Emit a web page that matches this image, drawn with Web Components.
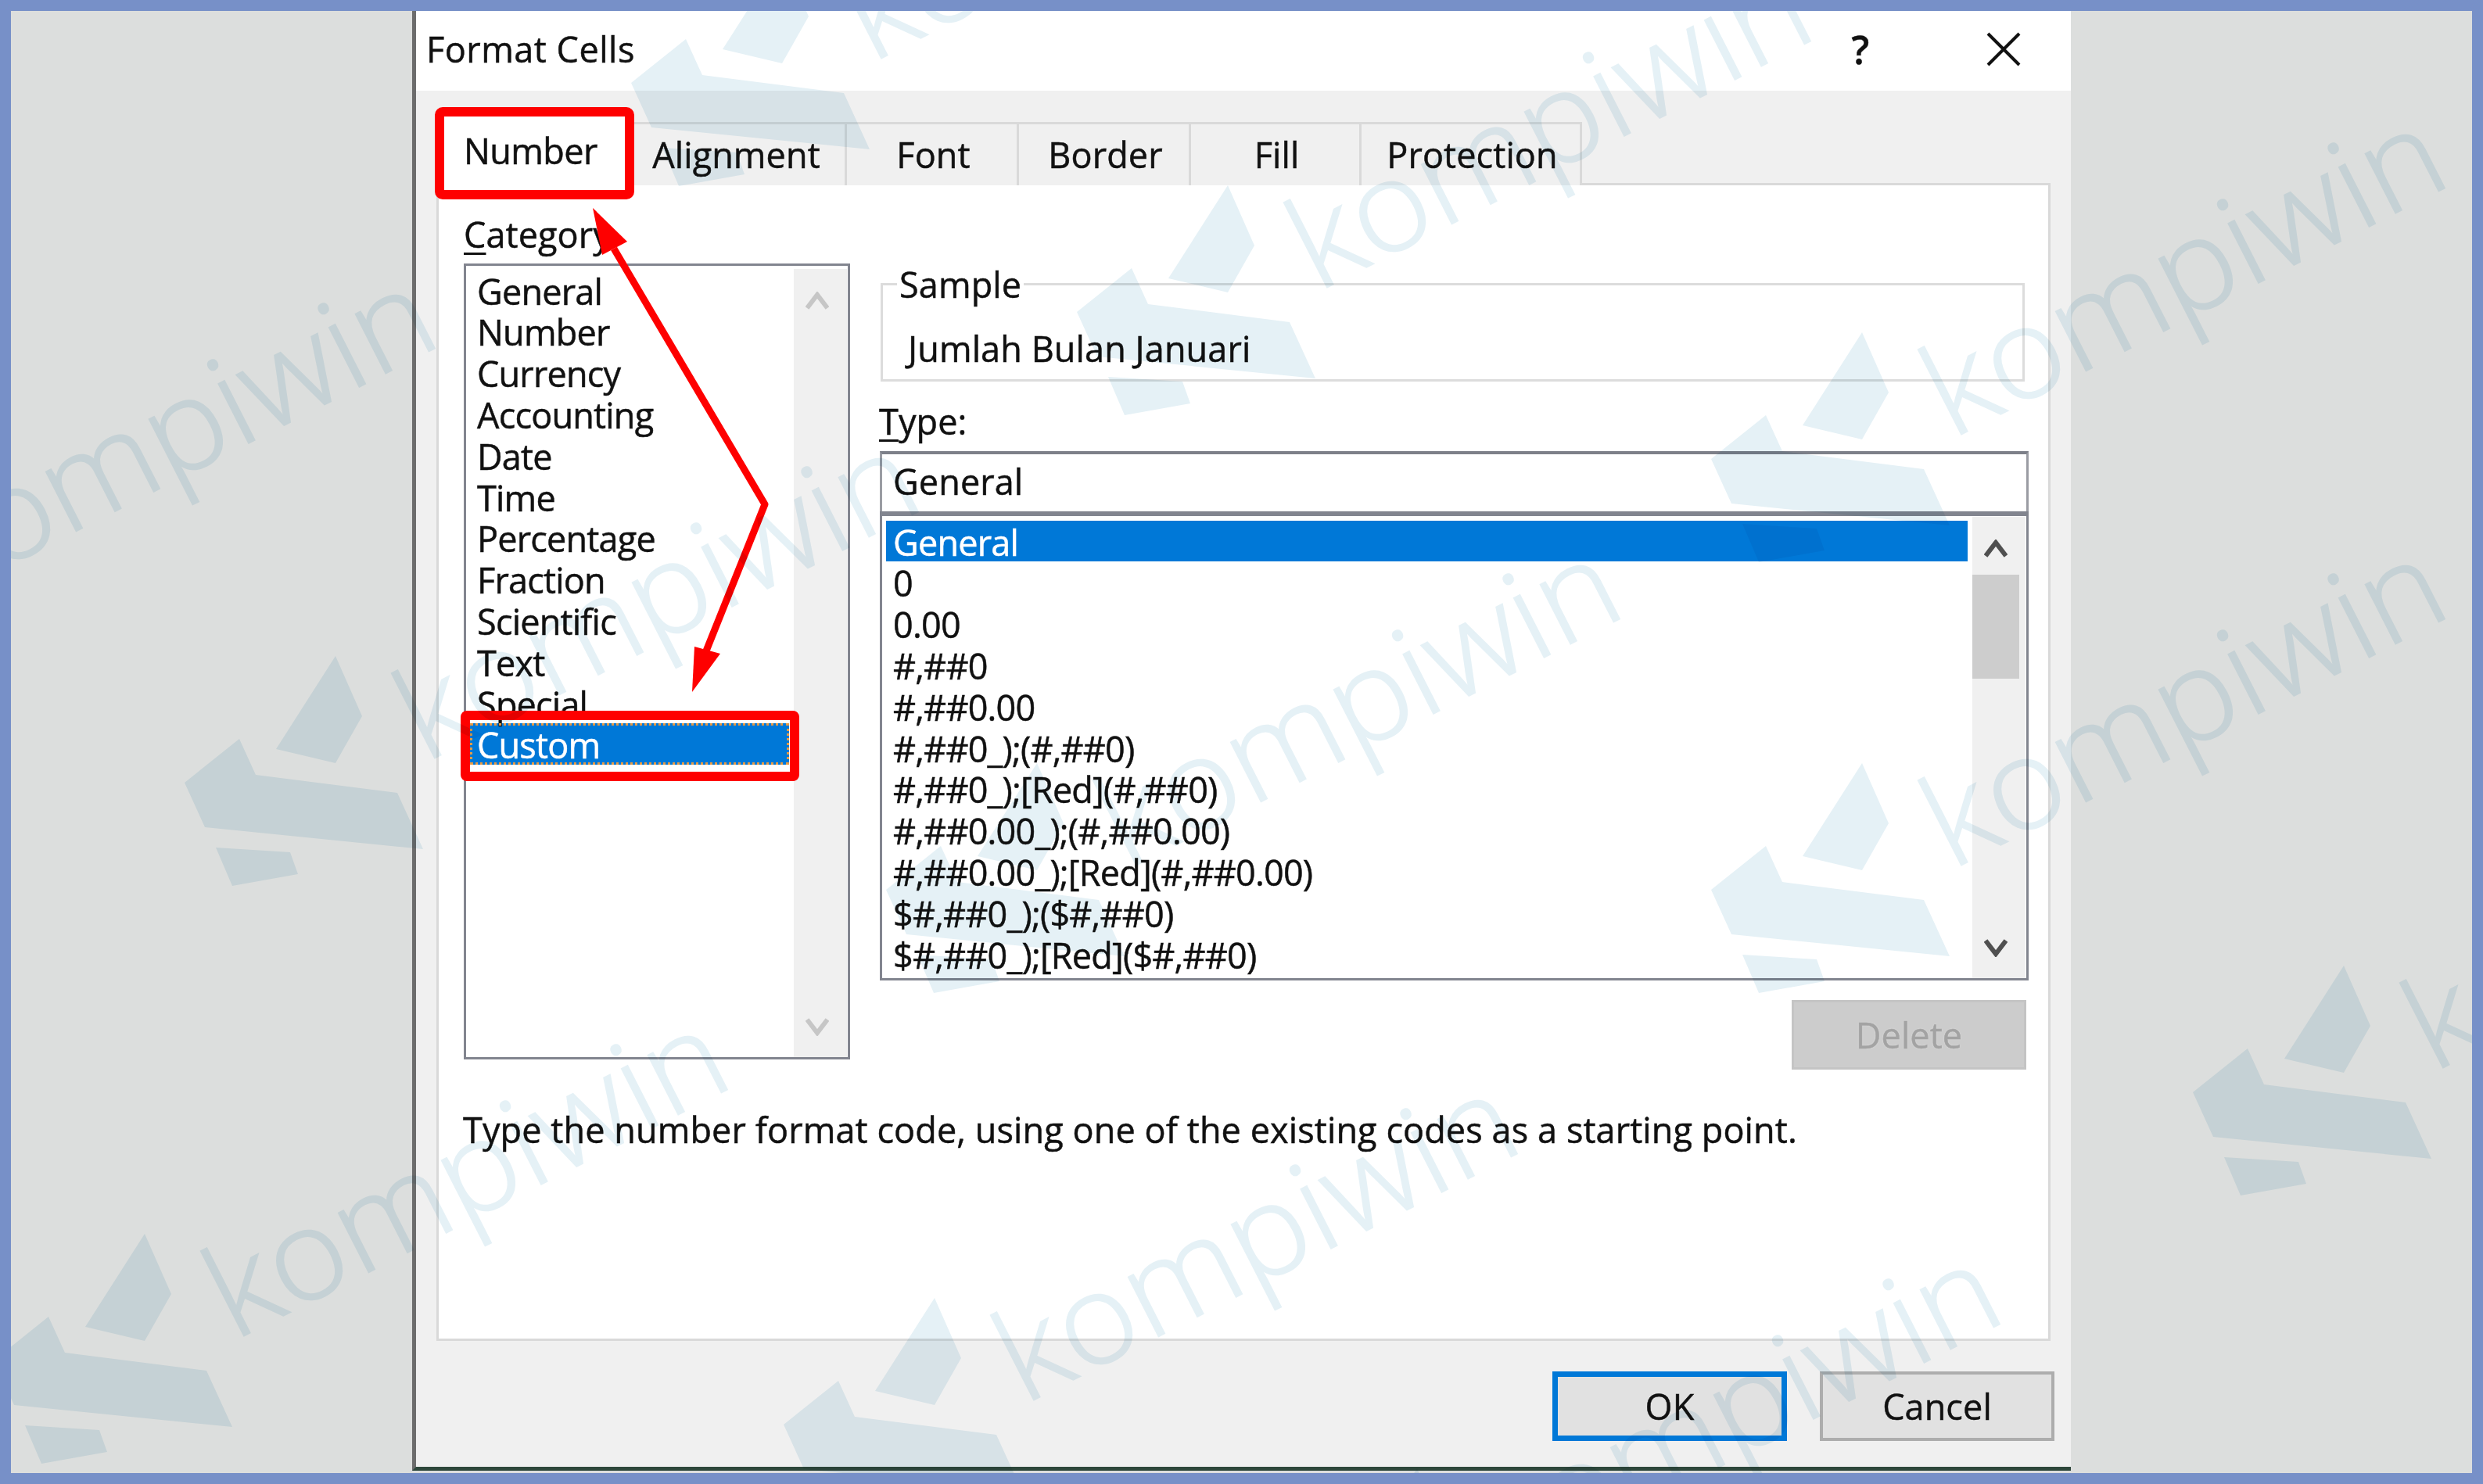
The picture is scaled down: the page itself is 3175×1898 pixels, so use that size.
<!DOCTYPE html>
<html>
<head>
<meta charset="utf-8">
<title>Format Cells</title>
<style>
  html, body { margin: 0; background: #dcdedd; }
  body {
    width: 3175px;
    height: 1898px;
    overflow: hidden;
    font: 45px/50px "Open Sans", "Noto Sans", "Liberation Sans", sans-serif;
    letter-spacing: 0.1px;
    color: #111;
    -webkit-text-stroke: 0.5px;
  }
</style>
</head>
<body>

<fc-screen>
  <fc-dialog heading="Format Cells">
    <fc-tabs slot="tabs">
      <fc-tab selected width="246" pad="28">Number</fc-tab>
      <fc-tab width="272" shift="12">Alignment</fc-tab>
      <fc-tab width="220">Font</fc-tab>
      <fc-tab width="220">Border</fc-tab>
      <fc-tab width="218">Fill</fc-tab>
      <fc-tab width="282">Protection</fc-tab>
    </fc-tabs>

    <fc-number-panel>
      <fc-label slot="category-label" key="C" rest="ategory"></fc-label>
      <fc-listbox slot="category" disabled-bar>
        <fc-option>General</fc-option>
        <fc-option>Number</fc-option>
        <fc-option>Currency</fc-option>
        <fc-option>Accounting</fc-option>
        <fc-option>Date</fc-option>
        <fc-option>Time</fc-option>
        <fc-option>Percentage</fc-option>
        <fc-option>Fraction</fc-option>
        <fc-option>Scientific</fc-option>
        <fc-option>Text</fc-option>
        <fc-option>Special</fc-option>
        <fc-option selected focused>Custom</fc-option>
      </fc-listbox>

      <fc-group slot="sample" legend="Sample">Jumlah Bulan Januari</fc-group>
      <fc-label slot="type-label" key="T" rest="ype:"></fc-label>
      <fc-input slot="type-input">General</fc-input>
      <fc-listbox slot="type-list" thumb>
        <fc-option selected>General</fc-option>
        <fc-option>0</fc-option>
        <fc-option>0.00</fc-option>
        <fc-option>#,##0</fc-option>
        <fc-option>#,##0.00</fc-option>
        <fc-option>#,##0_);(#,##0)</fc-option>
        <fc-option>#,##0_);[Red](#,##0)</fc-option>
        <fc-option>#,##0.00_);(#,##0.00)</fc-option>
        <fc-option>#,##0.00_);[Red](#,##0.00)</fc-option>
        <fc-option>$#,##0_);($#,##0)</fc-option>
        <fc-option>$#,##0_);[Red]($#,##0)</fc-option>
      </fc-listbox>
      <fc-button slot="delete" disabled>Delete</fc-button>
      <span slot="hint">Type the number format code, using one of the existing codes as a starting point.</span>
    </fc-number-panel>

    <fc-button slot="footer" primary>OK</fc-button>
    <fc-button slot="footer">Cancel</fc-button>
  </fc-dialog>
</fc-screen>

<script>
const shadowOf = (el, html) => {
  el.attachShadow({ mode: 'open' }).innerHTML = html;
};

class FcChevron extends HTMLElement {
  constructor() {
    super();
    const down = this.hasAttribute('down');
    shadowOf(this, `
      <style>
        :host { display: block; width: 30px; height: 24px; }
        svg { display: block; }
        path { fill: none; stroke: currentColor; stroke-width: 6; }
      </style>
      <svg width="30" height="24" viewBox="0 0 30 24">
        <path d="${down ? 'M2 3 L15 20 L28 3' : 'M2 21 L15 4 L28 21'}"/>
      </svg>
    `);
  }
}

class FcOption extends HTMLElement {
  constructor() {
    super();
    shadowOf(this, `
      <style>
        :host {
          display: block;
          height: 52.8px;
          line-height: 52.8px;
          padding: 2px 0 0 9px;
          white-space: nowrap;
          box-sizing: border-box;
          letter-spacing: -0.8px;
        }
        :host([selected]) {
          background: #0078d7;
          color: #fff;
        }
        :host([focused]) {
          outline: 3px dotted #e59a45;
          outline-offset: -3px;
        }
      </style>
      <slot></slot>
    `);
  }
}

class FcListbox extends HTMLElement {
  constructor() {
    super();
    const dim = this.hasAttribute('disabled-bar');
    shadowOf(this, `
      <style>
        :host {
          display: flex;
          box-sizing: border-box;
          background: #fff;
          border: 3px solid #82858f;
          height: 100%;
        }
        :host([thumb]) { border-top-width: 6px; }
        .rows {
          flex: 1;
          min-width: 0;
          overflow: hidden;
          padding: 4.6px 3px 0 5px;
        }
        :host([thumb]) .rows { padding-top: 5.6px; }
        .bar {
          flex: none;
          width: 68px;
          margin: 4px 1px 0 3px;
          background: #f0f0f0;
          display: flex;
          flex-direction: column;
          align-items: center;
          padding: 29px 8px 27px 0;
          box-sizing: border-box;
          color: ${dim ? '#c6c6c6' : '#505050'};
        }
        :host([thumb]) .bar { margin-top: 1px; }
        .thumb {
          width: 60px;
          height: 133px;
          margin-top: 21px;
          background: #cdcdcd;
        }
        .end { margin-top: auto; }
      </style>
      <div class="rows"><slot></slot></div>
      <div class="bar">
        <fc-chevron></fc-chevron>
        ${this.hasAttribute('thumb') ? '<div class="thumb"></div>' : ''}
        <fc-chevron class="end" down></fc-chevron>
      </div>
    `);
  }
}

class FcLabel extends HTMLElement {
  constructor() {
    super();
    shadowOf(this, `
      <style>
        :host { display: block; }
        u { text-underline-offset: 6px; text-decoration-thickness: 3px; }
      </style>
      <u>${this.getAttribute('key')}</u>${this.getAttribute('rest')}
    `);
  }
}

class FcGroup extends HTMLElement {
  constructor() {
    super();
    shadowOf(this, `
      <style>
        :host {
          display: block;
          position: relative;
          box-sizing: border-box;
          height: 126px;
          border: 3px solid #dcdcdc;
          padding: 56px 0 0 32px;
        }
        .legend {
          position: absolute;
          left: 18px;
          top: -26px;
          padding: 0 3px;
          background: #fff;
        }
      </style>
      <span class="legend">${this.getAttribute('legend')}</span>
      <slot></slot>
    `);
  }
}

class FcInput extends HTMLElement {
  constructor() {
    super();
    shadowOf(this, `
      <style>
        :host {
          display: flex;
          align-items: center;
          box-sizing: border-box;
          height: 77px;
          padding: 0 0 4px 14px;
          background: #fff;
          border: solid #9a9ca3;
          border-width: 4px 3px 0;
          border-top-color: #7d8089;
        }
      </style>
      <slot></slot>
    `);
  }
}

class FcButton extends HTMLElement {
  constructor() {
    super();
    shadowOf(this, `
      <style>
        :host {
          display: flex;
          align-items: center;
          justify-content: center;
          box-sizing: border-box;
          width: 300px;
          height: 89px;
          background: #e1e1e1;
          border: 4px solid #adadad;
        }
        :host([primary]) { border: 7px solid #0078d7; }
        :host([disabled]) {
          background: #cccccc;
          border: 3px solid #c4c4c4;
          color: #a3a3a3;
          text-shadow: 0 0 2px #e4e4e4;
        }
      </style>
      <slot></slot>
    `);
  }
}

class FcTab extends HTMLElement {
  constructor() {
    super();
    const width = this.getAttribute('width');
    const pad = this.getAttribute('pad');
    const shift = this.getAttribute('shift') || 0;
    shadowOf(this, `
      <style>
        :host {
          display: flex;
          align-items: center;
          justify-content: ${pad ? 'flex-start' : 'center'};
          box-sizing: border-box;
          width: ${width}px;
          height: 81px;
          padding: 0 ${shift}px 0 ${pad || 4}px;
          background: #f0f0f0;
          border: solid #d9d9d9;
          border-width: 3px 3px 0 0;
        }
        :host([selected]) {
          height: 93px;
          padding-top: 4px;
          padding-bottom: 0;
          letter-spacing: -0.6px;
          background: #fff;
          border-width: 0;
          position: relative;
        }
      </style>
      <slot></slot>
    `);
  }
}

class FcTabs extends HTMLElement {
  constructor() {
    super();
    shadowOf(this, `
      <style>
        :host {
          display: flex;
          align-items: flex-end;
          margin: 0 0 -3px 7px;
          position: relative;
        }
      </style>
      <slot></slot>
    `);
  }
}

class FcNumberPanel extends HTMLElement {
  constructor() {
    super();
    shadowOf(this, `
      <style>
        :host {
          display: block;
          box-sizing: border-box;
          height: 1481px;
          background: #fff;
          border: 3px solid #d9d9d9;
          padding: 38px 25px 0 32px;
        }
        .cols {
          display: grid;
          grid-template-columns: 494px 1469px;
          column-gap: 38px;
        }
        .left, .right { display: flex; flex-direction: column; }
        .left .lbl { margin-bottom: 12px; }
        .left .box { height: 1018px; }
        .right .sample { margin: 87px 5px 0 1px; }
        .right .lbl { margin: 26px 0 13px -1px; }
        .right .box { height: 600px; }
        .right .del { align-self: flex-end; margin: 25px 3px 0 0; }
        .hint { margin: 52px 0 0 -1px; white-space: nowrap; }
      </style>
      <div class="cols">
        <div class="left">
          <div class="lbl"><slot name="category-label"></slot></div>
          <div class="box"><slot name="category"></slot></div>
        </div>
        <div class="right">
          <div class="sample"><slot name="sample"></slot></div>
          <div class="lbl"><slot name="type-label"></slot></div>
          <slot name="type-input"></slot>
          <div class="box"><slot name="type-list"></slot></div>
          <div class="del"><slot name="delete"></slot></div>
        </div>
      </div>
      <div class="hint"><slot name="hint"></slot></div>
    `);
  }
}

class FcDialog extends HTMLElement {
  constructor() {
    super();
    shadowOf(this, `
      <style>
        :host {
          display: flex;
          flex-direction: column;
          box-sizing: border-box;
          height: 100%;
          border-left: 5px solid #6c6c6c;
          border-bottom: 5px solid #2e473b;
          background: #f0f0f0;
          filter: blur(0.6px);
        }
        .title {
          flex: none;
          display: flex;
          align-items: center;
          box-sizing: border-box;
          height: 102px;
          padding: 0 0 4px 13px;
          background: #fff;
        }
        .title h1 { font: inherit; letter-spacing: 0.5px; margin: 0; flex: 1; }
        .help { width: 30px; text-align: center; margin-right: 146px; font-weight: 600; font-size: 50px; }
        .close { display: block; margin-right: 64px; }
        .close path { stroke: #111; stroke-width: 4; fill: none; }
        .body {
          flex: 1;
          display: flex;
          flex-direction: column;
          padding: 28px 26px 0;
        }
        .footer {
          display: flex;
          justify-content: flex-end;
          gap: 42px;
          padding-top: 39px;
          margin-right: -5px;
        }
      </style>
      <div class="title">
        <h1>${this.getAttribute('heading')}</h1>
        <span class="help">?</span>
        <svg class="close" width="44" height="44" viewBox="0 0 44 44">
          <path d="M2 2 L42 42 M42 2 L2 42"/>
        </svg>
      </div>
      <div class="body">
        <slot name="tabs"></slot>
        <slot></slot>
        <div class="footer"><slot name="footer"></slot></div>
      </div>
    `);
  }
}

/* red markers drawn over the dialog, in page coordinates */
class FcAnnotations extends HTMLElement {
  constructor() {
    super();
    shadowOf(this, `
      <style>
        :host { position: absolute; inset: 0; display: block; pointer-events: none; }
        svg { position: absolute; left: 0; top: 0; }
        rect, path { stroke: #fe0000; fill: none; }
        .head { fill: #fe0000; stroke: none; }
      </style>
      <svg width="3147" height="1870" viewBox="14 14 3147 1870">
        <rect x="562" y="143" width="243" height="106" rx="4" stroke-width="12"/>
        <rect x="595" y="915" width="421" height="78" rx="2" stroke-width="12"/>
        <path d="M785 318 L978 645 L902 835" stroke-width="9" stroke-linejoin="round"/>
        <path class="head" d="M758 266 L802 309 L770 326 Z"/>
        <path class="head" d="M885 885 L921 836 L888 827 Z"/>
      </svg>
    `);
  }
}

/* kompiwin logo + name, repeated by hand where the site stamped it */
class FcWatermark extends HTMLElement {
  constructor() {
    super();
    const spots = [
      [2188, 425], [2188, 976], [807, -56], [1377, 237], [-8, 1578], [236, 839],
      [2804, 1235], [1002, 1660], [1133, 976], [1619, 1878], [-382, 630]
    ];
    const marks = spots.map(([x, y]) => `
      <g transform="translate(${x} ${y})">
        <polygon points="193,0 227,77 193,137 117,119"/>
        <polygon points="70,106 0,162 26,219 305,247 272,175 91,152"/>
        <polygon points="40,245 135,251 145,279 61,294"/>
        <text transform="translate(307 137) rotate(-27)" textLength="722" lengthAdjust="spacingAndGlyphs">kompiwin</text>
      </g>
    `).join('');
    shadowOf(this, `
      <style>
        :host {
          position: absolute;
          inset: 0;
          display: block;
          pointer-events: none;
          mix-blend-mode: multiply;
        }
        svg { position: absolute; left: 0; top: 0; }
        polygon, text { fill: #e5f1f6; }
        text {
          font: 300 160px "Open Sans", "Noto Sans", sans-serif;
          letter-spacing: 0;
          stroke: #e5f1f6;
          stroke-width: 2;
        }
      </style>
      <svg width="3147" height="1870" viewBox="14 14 3147 1870">${marks}</svg>
    `);
  }
}

class FcScreen extends HTMLElement {
  constructor() {
    super();
    shadowOf(this, `
      <style>
        :host {
          display: block;
          position: relative;
          box-sizing: border-box;
          width: 3175px;
          height: 1898px;
          overflow: hidden;
          background: #dcdedd;
          border: 14px solid #7790c8;
          padding: 0 513px 3px;
        }
      </style>
      <slot></slot>
      <fc-annotations></fc-annotations>
      <fc-watermark></fc-watermark>
    `);
  }
}

customElements.define('fc-chevron', FcChevron);
customElements.define('fc-option', FcOption);
customElements.define('fc-listbox', FcListbox);
customElements.define('fc-label', FcLabel);
customElements.define('fc-group', FcGroup);
customElements.define('fc-input', FcInput);
customElements.define('fc-button', FcButton);
customElements.define('fc-tab', FcTab);
customElements.define('fc-tabs', FcTabs);
customElements.define('fc-number-panel', FcNumberPanel);
customElements.define('fc-dialog', FcDialog);
customElements.define('fc-annotations', FcAnnotations);
customElements.define('fc-watermark', FcWatermark);
customElements.define('fc-screen', FcScreen);
</script>
</body>
</html>
